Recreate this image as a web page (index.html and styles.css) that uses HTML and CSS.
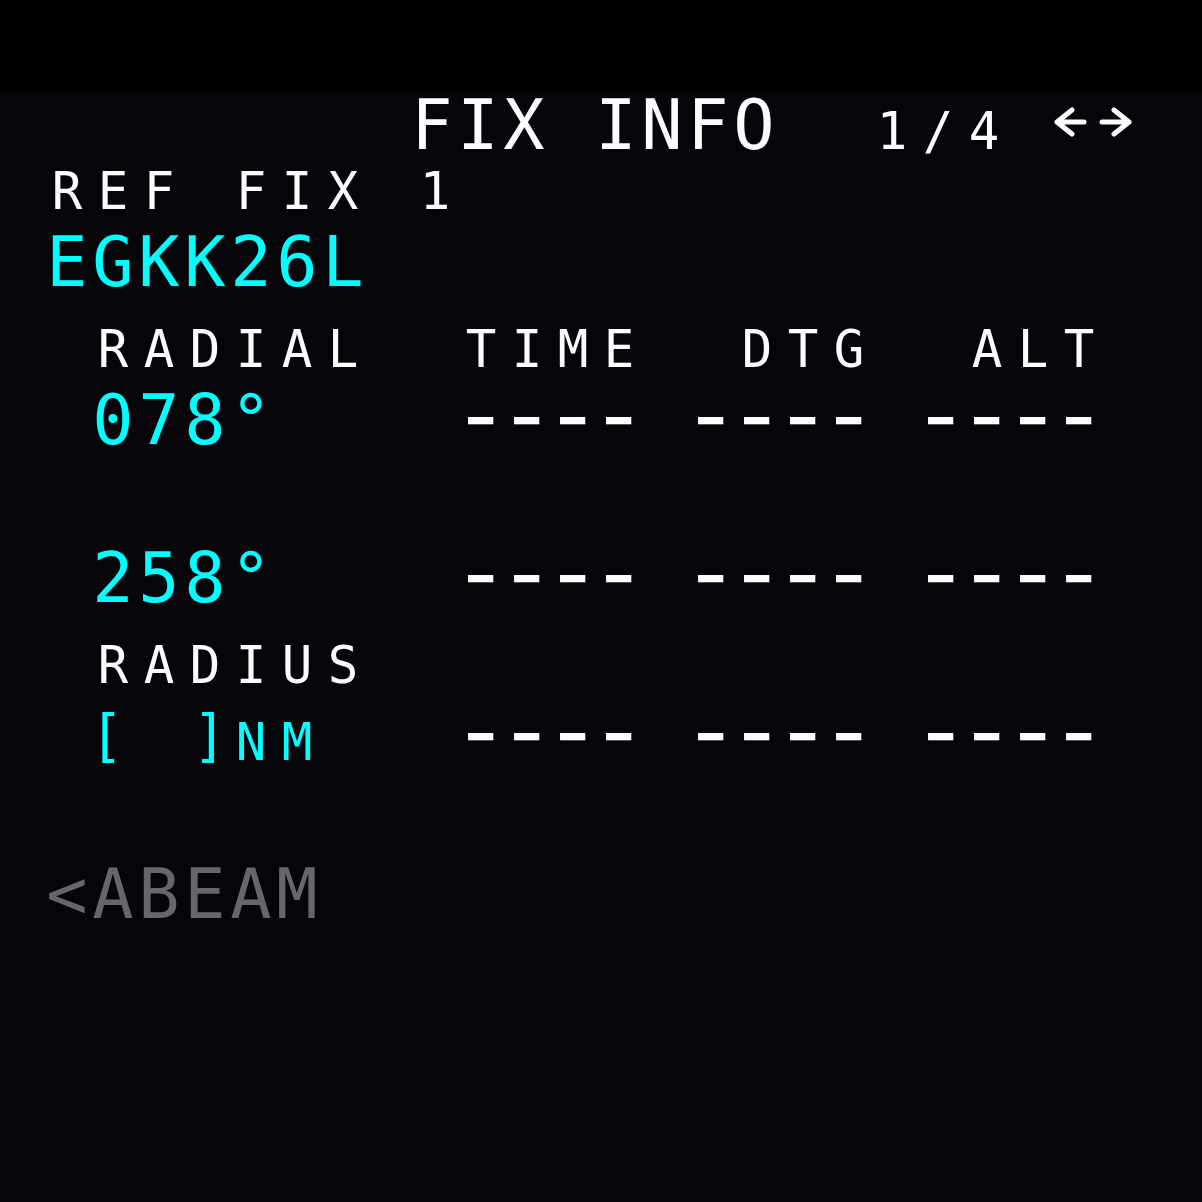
FILE: index.html
```html
<!DOCTYPE html>
<html>
<head>
<meta charset="utf-8">
<link rel="stylesheet" href="styles.css">
</head>
<body>
<div class="top"></div>
<div class="screen">
  <div class="line title lg white">        FIX INFO  <span class="s-in-l">1/4 </span><svg class="arrows" viewBox="0 0 80 30" width="80" height="30" aria-label="←→"><path d="M4 15 H31 M19 3 L4 15 L19 27 M49 15 H76 M61 3 L76 15 L61 27" fill="none" stroke="#fcfcff" stroke-width="5" stroke-linecap="round" stroke-linejoin="round"/></svg></div>
  <div class="line label sm white">REF FIX 1</div>
  <div class="line data lg cyan">EGKK26L</div>
  <div class="line label sm white"> RADIAL  TIME  DTG  ALT</div>
  <div class="line data lg"><span class="cyan"> 078°</span>    <span class="dash">----</span> <span class="dash">----</span> <span class="dash">----</span></div>
  <div class="line label sm"></div>
  <div class="line data lg"><span class="cyan"> 258°</span>    <span class="dash">----</span> <span class="dash">----</span> <span class="dash">----</span></div>
  <div class="line label sm white"> RADIUS</div>
  <div class="line data lg"><span class="cyan"> <span class="brk brk-l">[</span> <span class="brk brk-r">]</span></span><span class="s-in-l cyan">NM</span>   <span class="dash">----</span> <span class="dash">----</span> <span class="dash">----</span></div>
  <div class="line label sm"></div>
  <div class="line data lg grey">&lt;ABEAM</div>
</div>
</body>
</html>
```
FILE: styles.css
```css
html, body {
  margin: 0;
  padding: 0;
}
body {
  width: 1202px;
  height: 1202px;
  overflow: hidden;
  background: #000;
  font-family: "DejaVu Sans Mono", "Liberation Mono", monospace;
  color: #fcfcff;
}
.top {
  height: 93px;
  background: #000;
}
.screen {
  height: 1109px;
  background: #05050a;
}
.line {
  white-space: pre;
  line-height: 1;
  overflow: visible;
}
.lg {
  font-size: 68.6px;
  letter-spacing: 4.7px;
  padding-left: 46.35px;
}
.sm {
  font-size: 50.75px;
  letter-spacing: 15.45px;
  padding-left: 51.7px;
}
.title {
  height: 74px;
  line-height: 64px;
  padding-left: 43.35px;
}
.label {
  height: 61px;
}
.data {
  height: 97px;
}
.s-in-l {
  font-size: 50.75px;
  letter-spacing: 15.45px;
  line-height: 1;
  margin-left: 5.38px;
  margin-right: -5.38px;
}
.arrows {
  display: inline-block;
  vertical-align: 12px;
  margin-left: -2px;
}
.dash {
  display: inline-block;
  color: #fcfcff;
  -webkit-text-stroke: 2.5px #fcfcff;
  font-size: 60px;
  letter-spacing: -3.73px;
  line-height: 40px;
  vertical-align: 7px;
  transform: scaleX(1.42);
  transform-origin: 0 50%;
  margin-left: -5.6px;
  margin-right: 60px;
}
.brk {
  font-size: 57px;
  letter-spacing: 11.68px;
  line-height: 0;
  vertical-align: 5px;
}
.brk-l {
  margin-left: -2.8px;
  margin-right: 2.8px;
}
.brk-r {
  margin-left: 8.2px;
  margin-right: -8.2px;
}
.white { color: #fcfcff; }
.cyan { color: #00ffff; }
.grey { color: #66676c; }
```
